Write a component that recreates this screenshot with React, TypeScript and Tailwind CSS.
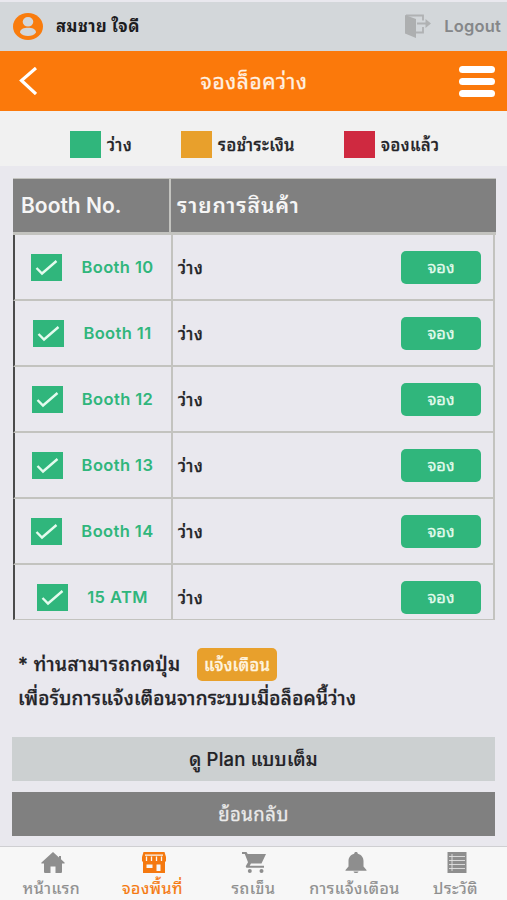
import clsx from 'clsx'

const booths = ['Booth 10', 'Booth 11', 'Booth 12', 'Booth 13', 'Booth 14', '15 ATM']

const legend = [
  { label: 'ว่าง', color: 'bg-[#30b67c]', pos: 'ml-[70px] w-[111px]' },
  { label: 'รอชำระเงิน', color: 'bg-[#e8a02c]', pos: 'w-[163px]' },
  { label: 'จองแล้ว', color: 'bg-[#cf2940]', pos: '' },
]

const tabs = [
  { label: 'หน้าแรก', icon: <HomeIcon /> },
  { label: 'จองพื้นที่', icon: <StoreIcon />, active: true },
  { label: 'รถเข็น', icon: <CartIcon /> },
  { label: 'การแจ้งเตือน', icon: <BellIcon /> },
  { label: 'ประวัติ', icon: <ListIcon /> },
]

function HomeIcon() {
  return (
    <svg width="24" height="21" viewBox="0 0 24 21" fill="currentColor">
      <path d="M12 0 .5 10.500c-.4.500-.2 1 .5 1h2v8c0 1 .5 1.500 1.500 1.500h5v-6.500h5V21h5c1 0 1.500-.5 1.500-1.500v-8h2c.7 0 .9-.5.5-1L20 7.300V4h-2v1.500z" />
    </svg>
  )
}

function StoreIcon() {
  return (
    <svg width="24" height="21" viewBox="0 0 24 21">
      <path fill="currentColor" d="M1.500 0h21L24 5v4l-1 1v11H1V10L0 9V5z" />
      <path stroke="#f7f7f7" strokeWidth="1.300" d="M3 3.200h18M4.500 4.500v4.500M9.500 4.500v4.500M14.500 4.500v4.500M19.500 4.500v4.500" />
      <path fill="#f7f7f7" d="M4.500 12.500h6V16h-6zM14.500 12.500h4V19h-4z" />
    </svg>
  )
}

function CartIcon() {
  return (
    <svg width="25" height="21" viewBox="0 0 25 21" fill="currentColor">
      <path d="M0 0h4.500l1.200 2H24L19.500 11.500H9l-1.300 2.300H22v2H5.500c-1.500 0-2-1-1.500-2l2-3.600L2.800 2H0z" />
      <circle cx="7.800" cy="19" r="2" />
      <circle cx="19.500" cy="19" r="2" />
    </svg>
  )
}

function BellIcon() {
  return (
    <svg width="22" height="21" viewBox="0 0 22 21" fill="currentColor">
      <path d="M11 0c1.200 0 1.800.7 1.800 1.700C16.500 2.500 18.500 5.500 18.500 9v5.500L21.500 18v.7H.5V18l3-3.500V9c0-3.500 2-6.500 5.700-7.300C9.200.7 9.800 0 11 0zM8.500 19.500h5c-.3 1-1.200 1.500-2.500 1.500s-2.200-.5-2.500-1.500z" />
    </svg>
  )
}

function ListIcon() {
  return (
    <svg width="20" height="21" viewBox="0 0 20 21">
      <path fill="currentColor" d="M.5 0h19v21H.5z" />
      <path stroke="#e2e2e2" d="M2 4.500h16M2 8.500h16M2 12.500h16M2 16.500h16M5 2v17" strokeWidth=".9" />
    </svg>
  )
}

function LogoutIcon() {
  return (
    <svg width="28" height="25" viewBox="0 0 28 25" fill="none">
      <path d="M2 1.500h17v5M19 13v5.500h-7M13 9.500h11" stroke="#b0b2b3" strokeWidth="1.800" />
      <path d="M21.500 5 27 9.500 21.500 14z" fill="#b0b2b3" />
      <path d="m1 1 11 4v19L1 19.500z" fill="#adafb0" />
    </svg>
  )
}

function CheckBox() {
  return (
    <span className="flex h-[27px] w-[31px] shrink-0 items-center justify-center bg-[#30b67c]">
      <svg width="23" height="17" viewBox="0 0 23 17" fill="none">
        <path d="m1.500 9 5.500 5.500L21.500 2" stroke="#e4fbee" strokeWidth="2.400" />
      </svg>
    </span>
  )
}

function BoothRow({ name, last }: { name: string; last: boolean }) {
  return (
    <div
      className={clsx(
        'flex border-l-2 border-l-[#4b4b4b] border-[#c3c3bf]',
        last ? 'h-[55px] border-b' : 'h-[66px] border-b-2'
      )}
    >
      <div className="flex h-16 w-[156px] items-center justify-center gap-[19px] pr-px">
        <CheckBox />
        <span className="text-[16.5px] font-semibold tracking-[0.4px] text-[#30b67c]">{name}</span>
      </div>
      <div className={clsx('flex flex-1 justify-between border-x-2 border-[#c3c3bf] pr-3 pl-[5px]', last ? 'h-[54px]' : 'h-16')}>
        <span className="mt-[21px] text-[16.5px] leading-6 font-medium tracking-[0.5px] [-webkit-text-stroke:0.3px]">ว่าง</span>
        <button className="mt-4 h-[33px] w-20 rounded-[5px] bg-[#30b67c] text-[16.5px] text-[#e4fbee] [-webkit-text-stroke:0.3px]">จอง</button>
      </div>
    </div>
  )
}

export default function App() {
  return (
    <div className="flex h-[900px] w-[507px] flex-col overflow-hidden bg-[#e9e8ee] font-['Inter','Noto_Sans_Thai_Looped','Loma','Waree','Garuda','Umpush','Noto_Serif_Thai',sans-serif] text-[#222226]">
      <div className="mt-0.5 flex h-[49px] shrink-0 items-center bg-[#d3d7da] pl-[13px]">
        <svg width="30" height="27" viewBox="0 0 30 27">
          <ellipse cx="15" cy="13.500" rx="15" ry="13.500" fill="#f97c0d" />
          <ellipse cx="15" cy="8.800" rx="5.300" ry="4.800" fill="#d3d7da" />
          <path d="M7 19.500c0-3.500 4-4.700 8-4.700s8 1.200 8 4.700c-2 2.600-4.500 3.500-8 3.500s-6-.9-8-3.500z" fill="#d3d7da" />
        </svg>
        <span className="ml-[13px] text-[16.5px] font-bold tracking-[0.5px] text-[#1c1c1e]">สมชาย ใจดี</span>
        <div className="ml-auto flex items-center gap-[12px] pr-[6px]">
          <LogoutIcon />
          <span className="text-[16.5px] font-semibold tracking-[0.2px] text-[#858789]">Logout</span>
        </div>
      </div>

      <div className="flex h-[60px] shrink-0 items-center justify-between bg-[#fb790b] pr-3 pl-[19px]">
        <svg width="18" height="28" viewBox="0 0 18 28" fill="none">
          <path d="M17 1 2.500 13.500 17 27" stroke="#fff" strokeWidth="3.200" />
        </svg>
        <h1 className="mt-0.5 ml-[12px] text-[21px] tracking-[0.6px] text-[#fff1e2] [-webkit-text-stroke:0.3px]">จองล็อคว่าง</h1>
        <div className="flex flex-col gap-[5px]">
          <span className="h-[7px] w-9 rounded-full bg-white" />
          <span className="h-[7px] w-9 rounded-full bg-white" />
          <span className="h-[7px] w-9 rounded-full bg-white" />
        </div>
      </div>

      <div className="flex h-[55px] shrink-0 items-center bg-[#f1f1f1] pt-[11px]">
        {legend.map((item) => (
          <div key={item.label} className={clsx('flex items-center gap-[6px]', item.pos)}>
            <span className={clsx('h-[27px] w-[31px]', item.color)} />
            <span className="pt-0.5 text-[16.5px] font-medium tracking-[0.5px] [-webkit-text-stroke:0.3px]">{item.label}</span>
          </div>
        ))}
      </div>

      <div className="mx-[13px] mt-3 w-[483px] shrink-0">
        <div className="flex h-[57px] border-t border-b-[3px] border-[#c3c3bf] bg-[#808080] text-[21px] font-semibold text-[#f5f5f5]">
          <div className="flex w-[158px] items-center border-r-2 border-[#c3c3bf] pl-2">Booth No.</div>
          <div className="flex items-center pl-1.5 tracking-[0.9px]">รายการสินค้า</div>
        </div>
        <div className="w-[482px]">
          {booths.map((name, i) => (
            <BoothRow key={name} name={name} last={i === booths.length - 1} />
          ))}
        </div>
      </div>

      <div className="mt-7 pl-[18px] text-[19px] font-medium tracking-[0.2px]">
        <div className="flex h-[33px] items-center">
          <span className="w-[179px] pt-0.5 tracking-[0.4px] [-webkit-text-stroke:0.3px]">* ท่านสามารถกดปุ่ม</span>
          <button className="h-[33px] w-20 rounded-[5px] bg-[#e8a02c] pt-px text-[16.5px] text-[#fff5e0] [-webkit-text-stroke:0.3px]">แจ้งเตือน</button>
        </div>
        <p className="h-[35px] leading-[36px] [-webkit-text-stroke:0.3px]">เพื่อรับการแจ้งเตือนจากระบบเมื่อล็อคนี้ว่าง</p>
      </div>

      <div className="mx-3 mt-[21px] flex flex-col gap-[11px] text-[18.5px] tracking-[0.2px]">
        <button className="h-11 bg-[#ccd0d1] pt-0.5 font-medium [-webkit-text-stroke:0.2px]">ดู Plan แบบเต็ม</button>
        <button className="h-11 bg-[#808080] pt-0.5 tracking-[0.5px] text-[#eaeaea] [-webkit-text-stroke:0.3px]">ย้อนกลับ</button>
      </div>

      <nav className="mt-auto grid h-[54px] shrink-0 grid-cols-5 border-t border-[#cfcfd2] bg-[#f7f7f7] pl-0.5">
        {tabs.map((tab) => (
          <div key={tab.label} className={clsx('flex flex-col items-center pt-[5px]', tab.active ? 'text-[#f5790f]' : 'text-[#8e8e8e]')}>
            {tab.icon}
            <span className="mt-[5px] -ml-0.5 text-[16px] leading-5 tracking-[0.5px] whitespace-nowrap [-webkit-text-stroke:0.2px]">{tab.label}</span>
          </div>
        ))}
      </nav>
    </div>
  )
}
